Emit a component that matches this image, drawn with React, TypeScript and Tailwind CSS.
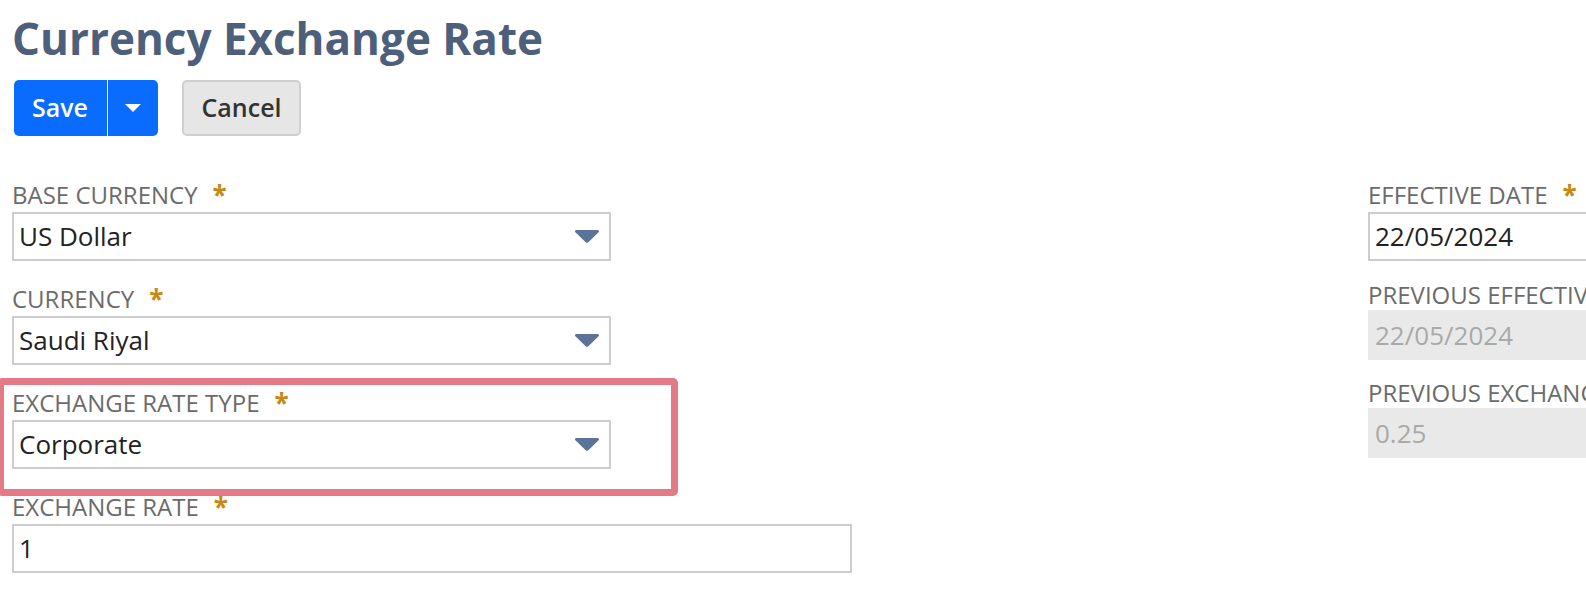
import type { ReactNode } from "react";

const inputBase =
  "flex h-[49px] items-center justify-between border-2 pl-[5px] pr-[10px] text-[26px]";

function DropArrow() {
  return (
    <svg width="24" height="13" viewBox="0 0 24 13" className="shrink-0">
      <path
        d="M1.6 0H22.4C23.8 0 24.5 1.4 23.6 2.3L13.1 12.4C12.5 13 11.5 13 10.9 12.4L0.4 2.3C-0.5 1.4 0.2 0 1.6 0Z"
        fill="#5a7396"
      />
    </svg>
  );
}

type FieldProps = {
  label: string;
  required?: boolean;
  children: ReactNode;
  className?: string;
};

function Field({ label, required, children, className }: FieldProps) {
  return (
    <div className={className}>
      <div className="flex h-[32px] items-center whitespace-nowrap text-[24px] leading-[32px] text-[#6b6b6b]">
        <span>{label}</span>
        {required && (
          <span className="ml-[15px] text-[26px] font-bold text-[#c8870e]">*</span>
        )}
      </div>
      <div className="mt-px">{children}</div>
    </div>
  );
}

function Select({ value, width }: { value: string; width: string }) {
  return (
    <div className={`${inputBase} ${width} border-[#cdcdcd] bg-white text-[#222]`}>
      <span>{value}</span>
      <DropArrow />
    </div>
  );
}

export default function App() {
  return (
    <div className="min-h-screen w-full overflow-hidden bg-white pl-3 font-['Open_Sans',sans-serif]">
      <h1 className="pt-3 text-[44px] font-bold leading-[52px] text-[#4d5f7b]">
        Currency Exchange Rate
      </h1>

      <div className="ml-[2px] mt-4 flex gap-6">
        <div className="flex h-[56px] rounded-[5px] bg-[#0a6cff] text-white">
          <div className="flex w-[93px] items-center pl-[18px] text-[25px] font-semibold">
            Save
          </div>
          <div className="w-px bg-white" />
          <div className="flex w-[50px] items-center justify-center">
            <svg width="16" height="8" viewBox="0 0 16 8">
              <path d="M0 0H16L8 8Z" fill="#fff" />
            </svg>
          </div>
        </div>
        <button className="flex h-[56px] w-[119px] items-center justify-center rounded-[5px] border-2 border-[#cfcfcf] bg-[#e6e6e6] text-[25px] font-semibold text-[#333]">
          Cancel
        </button>
      </div>

      <div className="mt-[43px] flex">
        <div className="w-[840px] shrink-0">
          <Field label="BASE CURRENCY" required>
            <Select value="US Dollar" width="w-[599px]" />
          </Field>
          <Field label="CURRENCY" required className="mt-[22px]">
            <Select value="Saudi Riyal" width="w-[599px]" />
          </Field>
          <div className="relative mt-[22px]">
            <Field label="EXCHANGE RATE TYPE" required>
              <Select value="Corporate" width="w-[599px]" />
            </Field>
            <div className="pointer-events-none absolute left-[-15px] top-[-9px] h-[118px] w-[681px] rounded-[5px] border-[7px] border-[#e47a86]" />
          </div>
          <Field label="EXCHANGE RATE" required className="mt-[22px]">
            <div className={`${inputBase} w-[840px] border-[#cdcdcd] text-[#222]`}>
              <span>1</span>
            </div>
          </Field>
        </div>

        <div className="ml-[516px] w-[420px] shrink-0">
          <Field label="EFFECTIVE DATE" required>
            <div className={`${inputBase} w-full border-[#cdcdcd] text-[#222]`}>
              <span>22/05/2024</span>
            </div>
          </Field>
          <Field label="PREVIOUS EFFECTIVE DATE" className="mt-[18px]">
            <div className={`${inputBase} -mt-[2px] h-[50px] w-full border-[#e9e9e9] bg-[#e9e9e9] text-[#a9a9a9]`}>
              <span>22/05/2024</span>
            </div>
          </Field>
          <Field label="PREVIOUS EXCHANGE RATE" className="mt-[17px]">
            <div className={`${inputBase} -mt-[2px] h-[50px] w-full border-[#e9e9e9] bg-[#e9e9e9] text-[#a9a9a9]`}>
              <span>0.25</span>
            </div>
          </Field>
        </div>
      </div>
    </div>
  );
}
